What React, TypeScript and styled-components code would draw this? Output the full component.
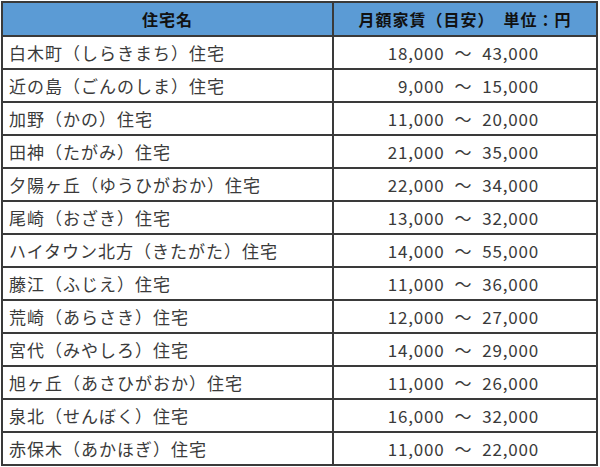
import React from "react";
import styled, { createGlobalStyle } from "styled-components";

const GlobalStyle = createGlobalStyle`
  html, body {
    margin: 0;
    padding: 0;
    background: #ffffff;
  }
  body {
    font-family: "Noto Sans CJK JP", "Noto Sans", sans-serif;
  }
`;

const Wrapper = styled.div`
  padding: 1px 0 0 1px;
`;

const Table = styled.table`
  border-collapse: collapse;
  width: 597px;
  table-layout: fixed;
`;

const HeadCell = styled.th`
  height: 32px;
  padding: 0;
  background: #5b9bd5;
  border: 2px solid #3a3a3a;
  color: #111;
  font-size: 16px;
  font-weight: 700;
  text-align: center;
  letter-spacing: 1px;
`;

const Cell = styled.td<{ $num?: boolean }>`
  height: 31px;
  padding: ${(p) => (p.$num ? "0 57px 0 0" : "0 0 0 6px")};
  border: 2px solid #3a3a3a;
  color: #3a3a3a;
  font-size: 17px;
  letter-spacing: ${(p) => (p.$num ? "0.8px" : "1px")};
  text-align: ${(p) => (p.$num ? "right" : "left")};
  white-space: pre;
  vertical-align: middle;
`;

const Tilde = styled.span`
  display: inline-block;
  margin: 0 10px;
`;

const rows: [string, string, string][] = [
  ["白木町（しらきまち）住宅", "18,000", "43,000"],
  ["近の島（ごんのしま）住宅", "9,000", "15,000"],
  ["加野（かの）住宅", "11,000", "20,000"],
  ["田神（たがみ）住宅", "21,000", "35,000"],
  ["夕陽ヶ丘（ゆうひがおか）住宅", "22,000", "34,000"],
  ["尾崎（おざき）住宅", "13,000", "32,000"],
  ["ハイタウン北方（きたがた）住宅", "14,000", "55,000"],
  ["藤江（ふじえ）住宅", "11,000", "36,000"],
  ["荒崎（あらさき）住宅", "12,000", "27,000"],
  ["宮代（みやしろ）住宅", "14,000", "29,000"],
  ["旭ヶ丘（あさひがおか）住宅", "11,000", "26,000"],
  ["泉北（せんぼく）住宅", "16,000", "32,000"],
  ["赤保木（あかほぎ）住宅", "11,000", "22,000"],
];

export default function App() {
  return (
    <>
      <GlobalStyle />
      <Wrapper>
        <Table>
          <colgroup>
            <col style={{ width: 331 }} />
            <col />
          </colgroup>
          <thead>
            <tr>
              <HeadCell>住宅名</HeadCell>
              <HeadCell>月額家賃（目安）　単位：円</HeadCell>
            </tr>
          </thead>
          <tbody>
            {rows.map(([name, min, max]) => (
              <tr key={name}>
                <Cell>{name}</Cell>
                <Cell $num>
                  {min}
                  <Tilde>～</Tilde>
                  {max}
                </Cell>
              </tr>
            ))}
          </tbody>
        </Table>
      </Wrapper>
    </>
  );
}
